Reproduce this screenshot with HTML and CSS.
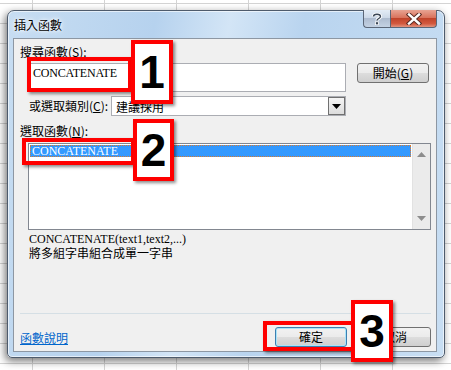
FILE: index.html
```html
<!DOCTYPE html>
<html lang="zh-Hant">
<head>
<meta charset="utf-8">
<link rel="stylesheet" href="styles.css">
</head>
<body>
<div class="window">
  <div class="titlebar">
    <span class="title">插入函數</span>
    <div class="caption-btns">
      <div class="cbtn help">
        <svg width="12" height="13" viewBox="0 0 12 13"><path d="M2.5 4.5 C2.5 1.5 9.5 1.5 9.5 4.5 C9.5 6.5 6 6.5 6 8.5" fill="none" stroke="#fff" stroke-width="3.2"/><path d="M2.5 4.5 C2.5 1.5 9.5 1.5 9.5 4.5 C9.5 6.5 6 6.5 6 8.5" fill="none" stroke="#3a4656" stroke-width="1.4"/><rect x="4.5" y="9.8" width="3" height="3" fill="#3a4656" stroke="#fff" stroke-width="0.8"/></svg>
      </div>
      <div class="cbtn close">
        <svg width="16" height="12" viewBox="0 0 16 12"><path d="M3 1.5 L13 10.5 M13 1.5 L3 10.5" stroke="#5a2a22" stroke-width="4.4" stroke-linecap="square"/><path d="M3 1.5 L13 10.5 M13 1.5 L3 10.5" stroke="#fff" stroke-width="2.4" stroke-linecap="square"/></svg>
      </div>
    </div>
  </div>
  <div class="content">
    <label class="lbl">搜尋函數(<u>S</u>):</label>
    <div class="row search-row">
      <div class="search-input">CONCATENATE</div>
      <div class="btn">開始(<u>G</u>)</div>
    </div>
    <div class="row cat-row">
      <span class="lbl">或選取類別(<u>C</u>):</span>
      <div class="select">
        <span>建議採用</span>
        <div class="drop"><svg width="9" height="5" viewBox="0 0 9 5"><path d="M0 0 H9 L4.5 5 Z" fill="#000"/></svg></div>
      </div>
    </div>
    <label class="lbl fn-lbl">選取函數(<u>N</u>):</label>
    <div class="listbox">
      <div class="items">
        <div class="item sel">CONCATENATE</div>
      </div>
      <div class="scroll">
        <svg width="9" height="5" viewBox="0 0 9 5"><path d="M0 5 H9 L4.5 0 Z" fill="#8d8d8d"/></svg>
        <svg width="9" height="5" viewBox="0 0 9 5"><path d="M0 0 H9 L4.5 5 Z" fill="#8d8d8d"/></svg>
      </div>
    </div>
    <div class="desc">
      <div class="sig">CONCATENATE(text1,text2,...)</div>
      <div class="summary">將多組字串組合成單一字串</div>
    </div>
    <div class="sep"></div>
    <div class="row footer">
      <a class="link">函數說明</a>
      <div class="btns">
        <div class="btn ok">確定</div>
        <div class="btn">取消</div>
      </div>
    </div>
  </div>

  <div class="hl hl1"></div>
  <div class="num num1">1</div>
  <div class="hl hl2"></div>
  <div class="num num2">2</div>
  <div class="hl hl3"></div>
  <div class="num num3">3</div>
</div>
</body>
</html>
```
FILE: styles.css
```css
html, body {
  margin: 0;
  padding: 0;
}
body {
  width: 451px;
  height: 370px;
  overflow: hidden;
  background-color: #fff;
  background-image:
    linear-gradient(to right, transparent 32px, #d4d4d4 32px, #d4d4d4 33px, transparent 33px),
    linear-gradient(to bottom, transparent 3px, #d4d4d4 3px, #d4d4d4 4px, transparent 4px);
  background-size: 72px 100%, 100% 20px;
  font-family: "Noto Sans CJK TC", "Liberation Sans", sans-serif;
  font-size: 12px;
  color: #000;
  padding: 10px 0 0 7px;
  box-sizing: border-box;
}
.window {
  position: relative;
  width: 438px;
  height: 348px;
  box-sizing: border-box;
  border: 1px solid #4e5b6c;
  border-radius: 7px 7px 5px 5px;
  background: linear-gradient(100deg, #c7ddf2 0%, #b6d2ee 30%, #d3e5f6 45%, #b9d4ef 60%, #c8def3 100%);
  box-shadow: -2px 3px 8px rgba(0,0,0,0.55), inset 0 0 0 1px rgba(255,255,255,0.6);
  padding: 0 7px 5px 5px;
  display: flex;
  flex-direction: column;
}
.titlebar {
  height: 27px;
  flex: none;
  display: flex;
  align-items: flex-start;
  justify-content: space-between;
}
.title {
  margin-top: 6px;
  margin-left: 1px;
  font-size: 12px;
  line-height: 16px;
  color: #000;
  text-shadow: 0 0 6px #fff, 0 0 3px #fff;
}
.caption-btns {
  display: flex;
  margin-top: -1px;
}
.cbtn {
  height: 18px;
  box-sizing: border-box;
  border: 1px solid #5b6677;
  border-top: none;
  display: flex;
  align-items: center;
  justify-content: center;
}
.help {
  width: 27px;
  border-radius: 0 0 0 4px;
  border-right: none;
  background: linear-gradient(#e3ecf6 0%, #cdd9e8 45%, #aebcd0 50%, #c4d2e3 100%);
}
.close {
  width: 47px;
  border-radius: 0 0 4px 0;
  background: linear-gradient(#e8a493 0%, #d9735d 45%, #c1442b 50%, #d2593f 80%, #e3947f 100%);
}
.content {
  flex: 1;
  background: #f0f0f0;
  border: 1px solid #8d97a3;
  padding: 5px 5px 0 6px;
  display: flex;
  flex-direction: column;
}
.lbl {
  line-height: 16px;
  display: block;
}
.lbl u, .btn u {
  text-decoration: underline;
}
.row {
  display: flex;
  align-items: center;
}
.search-row {
  margin-top: 3px;
  margin-left: 8px;
  align-items: flex-start;
}
.search-input {
  width: 318px;
  height: 29px;
  box-sizing: border-box;
  background: #fff;
  border: 1px solid #abadb3;
  font-family: "Liberation Serif", serif;
  font-size: 12px;
  line-height: 16px;
  padding: 1px 0 0 4px;
  letter-spacing: -0.2px;
}
.btn {
  width: 72px;
  height: 20px;
  box-sizing: border-box;
  border: 1px solid #707070;
  border-radius: 3px;
  background: linear-gradient(#f2f2f2 0%, #ebebeb 50%, #dddddd 51%, #cfcfcf 100%);
  display: flex;
  align-items: center;
  justify-content: center;
  font-size: 12px;
  line-height: 14px;
}
.search-row .btn {
  margin-left: 11px;
}
.cat-row {
  margin-top: 4px;
  margin-left: 9px;
}
.cat-row .lbl {
  width: 82px;
}
.select {
  width: 235px;
  height: 20px;
  box-sizing: border-box;
  border: 1px solid #abadb3;
  background: #fff;
  display: flex;
  align-items: center;
  justify-content: space-between;
  padding-left: 4px;
}
.drop {
  width: 17px;
  height: 18px;
  box-sizing: border-box;
  border: 1px solid #707070;
  background: linear-gradient(#f4f4f4, #dcdcdc);
  display: flex;
  align-items: center;
  justify-content: center;
}
.fn-lbl {
  margin-top: 7px;
}
.listbox {
  margin-top: 4px;
  margin-left: 8px;
  width: 403px;
  height: 87px;
  box-sizing: border-box;
  border: 1px solid #828790;
  background: #fff;
  display: flex;
}
.items {
  flex: 1;
  padding: 1px;
}
.item {
  height: 12px;
  line-height: 12px;
  font-family: "Liberation Serif", serif;
  font-size: 12px;
  padding-left: 2px;
}
.item.sel {
  background: #3399ff;
  color: #fff;
  outline: 1px dotted #d87a30;
  outline-offset: -1px;
}
.scroll {
  width: 17px;
  background: #ebebeb;
  border-left: 1px solid #e2e2e2;
  display: flex;
  flex-direction: column;
  align-items: center;
  justify-content: space-between;
  padding: 8px 0 8px;
}
.desc {
  margin-top: 2px;
  margin-left: 9px;
  line-height: 14px;
}
.sig {
  font-family: "Liberation Serif", serif;
  font-size: 12px;
  height: 14px;
}
.summary {
  height: 14px;
  line-height: 14px;
}
.sep {
  margin-top: 53px;
  height: 1px;
  background: #d5dfe5;
  width: 411px;
}
.footer {
  justify-content: space-between;
  margin-top: 13px;
  width: 411px;
}
.link {
  color: #0066cc;
  text-decoration: underline;
  margin-top: 1px;
}
.btns {
  display: flex;
  gap: 12px;
}
.btn.ok {
  border-color: #3c7fb1;
  box-shadow: inset 0 0 0 1px #a9e4f9;
}
.hl {
  position: absolute;
  border: 4px solid #f00;
  box-shadow: 2px 2px 3px rgba(0,0,0,0.45);
  box-sizing: border-box;
}
.num {
  position: absolute;
  border: 4px solid #f00;
  background: #fff;
  box-sizing: border-box;
  box-shadow: 2px 2px 3px rgba(0,0,0,0.45);
  font-family: "Liberation Sans", Arial, sans-serif;
  font-weight: bold;
  font-size: 46px;
  line-height: 1;
  display: flex;
  align-items: center;
  justify-content: center;
  color: #000;
}
/* window origin: x=7, y=10 (border-box) */
.hl1 { left: 19px; top: 46px; width: 105px; height: 35px; }
.num1 { left: 123px; top: 29px; width: 42px; height: 64px; }
.hl2 { left: 14px; top: 127px; width: 113px; height: 27px; }
.num2 { left: 125px; top: 108px; width: 41px; height: 62px; }
.hl3 { left: 255px; top: 310px; width: 94px; height: 30px; }
.num3 { left: 343px; top: 289px; width: 42px; height: 62px; }
```
